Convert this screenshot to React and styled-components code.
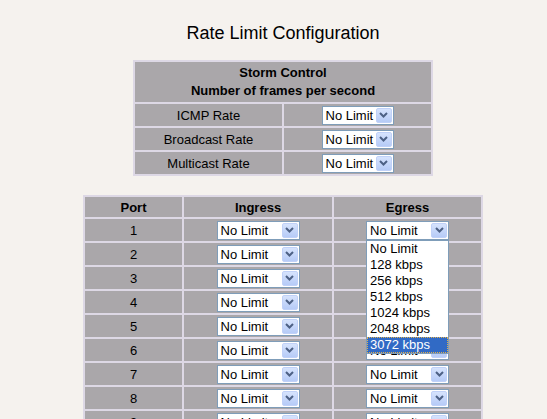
import React from 'react';
import styled, {createGlobalStyle} from 'styled-components';

const pageBg = "#f5f2ee";
const gridBg = "#ddd8e5";
const cellBg = "#aaa7aa";
const selectBorder = "#7f9db9";

const GlobalStyle = createGlobalStyle`
  html, body {
    margin: 0;
    padding: 0;
    overflow: hidden;
    background: ${pageBg};
    font-family: "Liberation Sans", Arial, sans-serif;
    color: #000;
  }
`;

const Page = styled.div`
  box-sizing: border-box;
  width: 100%;
  padding: 23px 0 0 19px;
  display: flex;
  flex-direction: column;
  align-items: center;
`;

const Title = styled.h1`
  margin: 0 0 16px;
  font-size: 18px;
  line-height: 21px;
  font-weight: normal;
`;

const Grid = styled.table`
  width: ${props => props.width}px;
  margin-bottom: 19px;
  table-layout: fixed;
  border-collapse: separate;
  border-spacing: 2px;
  background: ${gridBg};
  font-size: 13px;
`;

const Cell = styled.td`
  padding: 0;
  height: ${props => props.h || 22}px;
  background: ${cellBg};
  text-align: center;
  vertical-align: middle;
  font-weight: ${props => props.bold ? 'bold' : 'normal'};
  line-height: ${props => props.lh || 15}px;
  position: relative;
`;

const SelectBox = styled.div`
  box-sizing: border-box;
  display: inline-flex;
  align-items: center;
  justify-content: space-between;
  width: ${props => props.width}px;
  height: 19px;
  padding: 0 1px 0 3px;
  background: #fff;
  border: 1px solid ${selectBorder};
  text-align: left;
  vertical-align: middle;
  font-size: 13px;
  line-height: 15px;
`;

const Anchor = styled.div`
  position: relative;
  display: inline-block;
  vertical-align: middle;
  line-height: 0;
`;

const DropButton = styled.span`
  box-sizing: border-box;
  width: 16px;
  height: 15px;
  display: flex;
  align-items: center;
  justify-content: center;
  background: linear-gradient(#d6e3fd, #b6cbf7);
  border: 1px solid #c0d1f8;
  border-radius: 2px;
`;

const OptionList = styled.ul`
  position: absolute;
  left: 0;
  top: 100%;
  z-index: 2;
  box-sizing: border-box;
  width: 83px;
  margin: 0;
  padding: 0;
  list-style: none;
  background: #fff;
  border: 1px solid ${selectBorder};
  text-align: left;
  font-size: 13px;
`;

const Option = styled.li`
  box-sizing: border-box;
  height: 16px;
  line-height: 14px;
  padding-left: 2px;
  white-space: nowrap;
  background: ${props => props.active ? '#316ac5' : 'transparent'};
  color: ${props => props.active ? '#fff' : '#000'};
  border: 1px ${props => props.active ? 'dotted #e0b050' : 'solid transparent'};
`;

const rateOptions = ['No Limit', '128 kbps', '256 kbps', '512 kbps', '1024 kbps', '2048 kbps', '3072 kbps'];

function Chevron() {
    return (
        <svg width="9" height="6" viewBox="0 0 9 6">
            <path d="M1 1 L4.5 4.5 L8 1" fill="none" stroke="#4d6185" strokeWidth="2"/>
        </svg>
    );
}

function Select({width, open}) {
    return (
        <Anchor>
            <SelectBox width={width}>
                <span>No Limit</span>
                <DropButton><Chevron/></DropButton>
            </SelectBox>
            {open &&
                <OptionList>
                    {rateOptions.map((item, index) =>
                        <Option key={item} active={index === rateOptions.length - 1}>{item}</Option>
                    )}
                </OptionList>
            }
        </Anchor>
    );
}

const stormRows = ['ICMP Rate', 'Broadcast Rate', 'Multicast Rate'];
const ports = [1, 2, 3, 4, 5, 6, 7, 8, 9, 10];

function App() {
    return (
        <Page>
            <GlobalStyle/>
            <Title>Rate Limit Configuration</Title>

            <Grid width={300}>
                <tbody>
                <tr>
                    <Cell colSpan={2} h={40} lh={18} bold>Storm Control<br/>Number of frames per second</Cell>
                </tr>
                {stormRows.map(label =>
                    <tr key={label}>
                        <Cell>{label}</Cell>
                        <Cell><Select width={72}/></Cell>
                    </tr>
                )}
                </tbody>
            </Grid>

            <Grid width={400}>
                <colgroup>
                    <col style={{width: 97}}/>
                    <col style={{width: 148}}/>
                    <col style={{width: 147}}/>
                </colgroup>
                <tbody>
                <tr>
                    <Cell h={20} bold>Port</Cell>
                    <Cell h={20} bold>Ingress</Cell>
                    <Cell h={20} bold>Egress</Cell>
                </tr>
                {ports.map(port =>
                    <tr key={port}>
                        <Cell>{port}</Cell>
                        <Cell><Select width={83}/></Cell>
                        <Cell><Select width={83} open={port === 1}/></Cell>
                    </tr>
                )}
                </tbody>
            </Grid>
        </Page>
    );
}

export default App;
